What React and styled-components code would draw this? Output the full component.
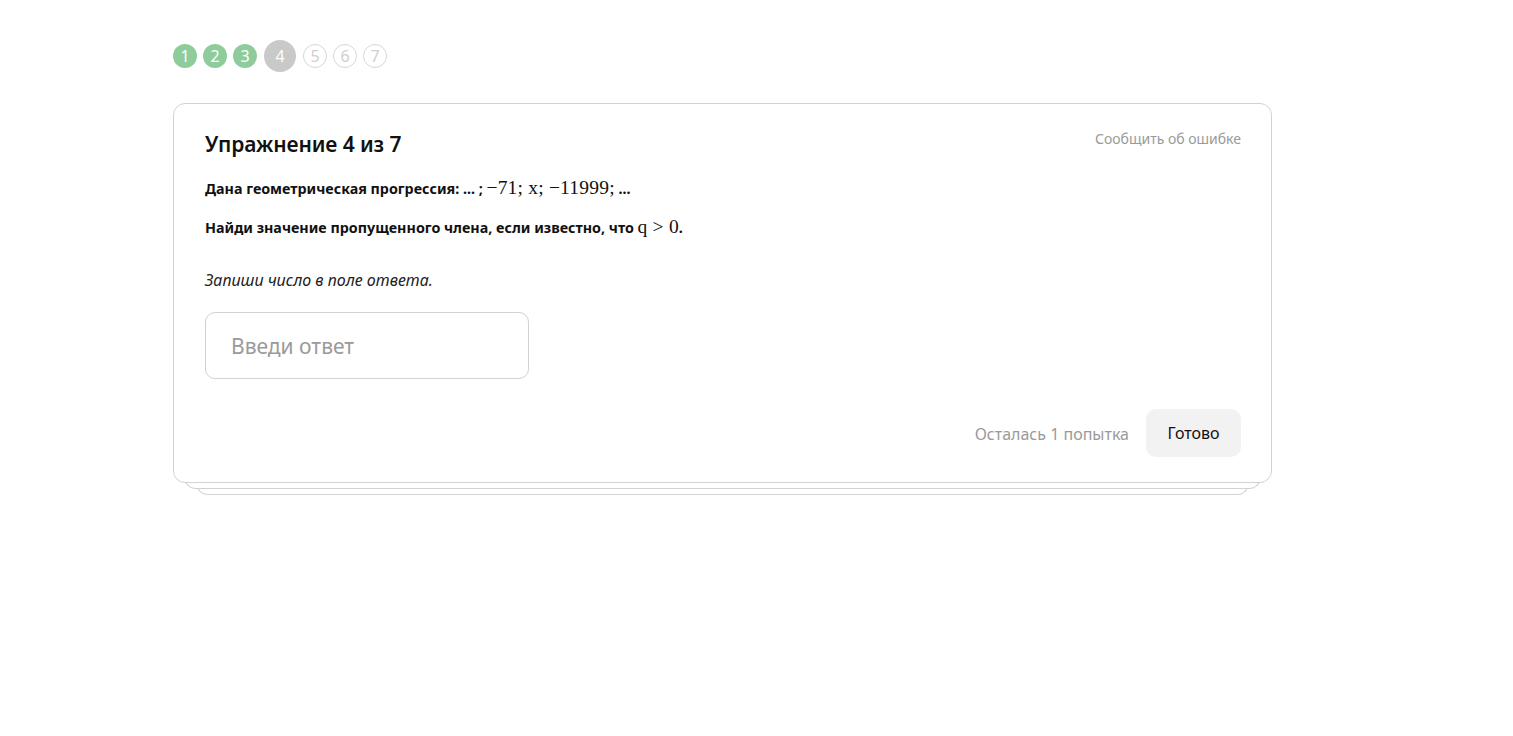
import React from "react";
import styled, { createGlobalStyle } from "styled-components";

const GlobalStyle = createGlobalStyle`
  body {
    margin: 0;
    background: #fff;
    font-family: "Noto Sans", "Open Sans", sans-serif;
    color: #111;
  }
`;

const Page = styled.div`
  padding: 40px 0 0 173px;
  width: 1099px;
`;

const Steps = styled.div`
  display: flex;
  align-items: center;
  gap: 6px;
  height: 32px;
`;

const Step = styled.div`
  display: flex;
  align-items: center;
  justify-content: center;
  box-sizing: border-box;
  width: ${p => (p.$active ? 32 : 24)}px;
  height: ${p => (p.$active ? 32 : 24)}px;
  margin: 0 ${p => (p.$active ? 1 : 0)}px;
  border-radius: 50%;
  font-size: 16px;
  background: ${p =>
    p.$state === "done" ? "#8fcc9b" : p.$state === "active" ? "#c9c9c9" : "#fff"};
  border: 1px solid
    ${p => (p.$state === "todo" ? "#d6d6d6" : "transparent")};
  color: ${p => (p.$state === "todo" ? "#cfcfcf" : "#fff")};
`;

const CardStack = styled.div`
  position: relative;
  margin-top: 31px;
  padding-bottom: 12px;

  &::before,
  &::after {
    content: "";
    position: absolute;
    bottom: 6px;
    left: 11px;
    right: 11px;
    height: 40px;
    border: 1px solid #d2d2d2;
    border-top: none;
    border-radius: 0 0 12px 12px;
    background: #fff;
  }

  &::after {
    bottom: 0;
    left: 23px;
    right: 23px;
    z-index: -1;
  }
`;

const Card = styled.div`
  position: relative;
  z-index: 1;
  box-sizing: border-box;
  height: 380px;
  padding: 26px 30px 25px 31px;
  border: 1px solid #d2d2d2;
  border-radius: 12px;
  background: #fff;
  display: flex;
  flex-direction: column;
`;

const Header = styled.div`
  display: flex;
  justify-content: space-between;
  align-items: flex-start;
`;

const Title = styled.h2`
  margin: 0;
  font-size: 21px;
  font-weight: 600;
  letter-spacing: -0.1px;
  line-height: 28px;
`;

const ReportLink = styled.span`
  margin-top: -1px;
  font-size: 14px;
  color: #9a9a9a;
`;

const Statement = styled.p`
  margin: ${p => p.$top}px 0 0;
  font-size: 14.3px;
  font-weight: 700;
  line-height: 22px;
`;

const Math = styled.span`
  font-family: "Liberation Serif", "DejaVu Serif", serif;
  font-weight: 400;
  font-size: 19.5px;
  letter-spacing: 0.2px;
`;

const Hint = styled.p`
  margin: 30px 0 0;
  font-size: 16px;
  font-style: italic;
  line-height: 22px;
  color: #222;
`;

const AnswerInput = styled.input`
  margin-top: 21px;
  box-sizing: border-box;
  width: 324px;
  height: 67px;
  padding: 0 25px;
  border: 1px solid #d2d2d2;
  border-radius: 10px;
  font-family: "Noto Sans", sans-serif;
  font-size: 21px;
  outline: none;

  &::placeholder {
    color: #9a9a9a;
  }
`;

const Footer = styled.div`
  margin-top: auto;
  display: flex;
  justify-content: flex-end;
  align-items: center;
  gap: 17px;
`;

const Attempts = styled.span`
  font-size: 16px;
  color: #9a9a9a;
  padding-top: 1px;
`;

const Button = styled.button`
  width: 95px;
  height: 48px;
  border: none;
  border-radius: 10px;
  background: #f2f2f2;
  font-family: "Noto Sans", sans-serif;
  font-size: 16px;
  color: #111;
  padding-bottom: 2px;
`;

const steps = [
  { n: 1, state: "done" },
  { n: 2, state: "done" },
  { n: 3, state: "done" },
  { n: 4, state: "active" },
  { n: 5, state: "todo" },
  { n: 6, state: "todo" },
  { n: 7, state: "todo" },
];

const App = () => {
  return (
    <>
      <GlobalStyle />
      <Page>
        <Steps>
          {steps.map(s => (
            <Step key={s.n} $state={s.state} $active={s.state === "active"}>
              {s.n}
            </Step>
          ))}
        </Steps>
        <CardStack>
          <Card>
            <Header>
              <Title>Упражнение 4 из 7</Title>
              <ReportLink>Сообщить об ошибке</ReportLink>
            </Header>
            <Statement $top={19}>
              Дана геометрическая прогрессия: ... ; <Math>−71; x; −11999;</Math> ...
            </Statement>
            <Statement $top={16}>
              Найди значение пропущенного члена, если известно, что{" "}
              <Math>q &gt; 0</Math>.
            </Statement>
            <Hint>Запиши число в поле ответа.</Hint>
            <AnswerInput placeholder="Введи ответ" />
            <Footer>
              <Attempts>Осталась 1 попытка</Attempts>
              <Button>Готово</Button>
            </Footer>
          </Card>
        </CardStack>
      </Page>
    </>
  );
};

export default App;
